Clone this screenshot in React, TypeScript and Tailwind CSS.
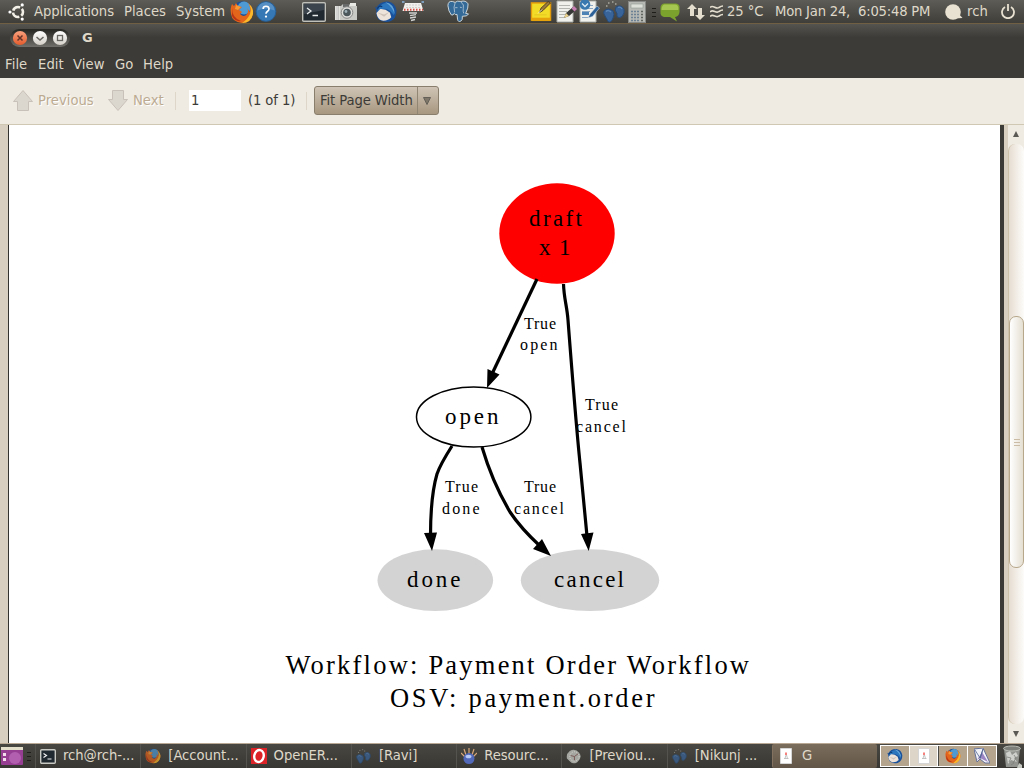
import type { ReactNode } from "react";

const SANS = "font-['DejaVu_Sans',sans-serif]";

function Icon({ box, className, children }: { box: string; className: string; children: ReactNode }) {
  return (
    <svg viewBox={box} className={`block shrink-0 ${className}`} aria-hidden="true">
      {children}
    </svg>
  );
}

function Ubuntu({ className }: { className: string }) {
  return (
    <Icon box="0 0 18 18" className={className}>
      <circle cx="10" cy="9" r="5" fill="none" stroke="#f3f0e8" strokeWidth="2.6" strokeDasharray="8.4 2.072" strokeDashoffset="4.2" />
      <circle cx="2" cy="9" r="1.6" fill="#fff" />
      <circle cx="14.200" cy="1.900" r="1.6" fill="#fff" />
      <circle cx="14.200" cy="16.100" r="1.6" fill="#fff" />
    </Icon>
  );
}

function Firefox({ className }: { className: string }) {
  return (
    <Icon box="0 0 24 24" className={className}>
      <circle cx="12.3" cy="11.5" r="10.3" fill="#1d4f94" />
      <circle cx="14" cy="8" r="6.5" fill="#4d9ad5" />
      <path d="M2 4L4 6L6 3L8 6L12 7L9 10L12 12L10 14Q14 18 17 14Q19 11 17 8L20 12Q21 7 18 3Q24 8 23 14Q21 23 12 23Q2 22 1 14Q0 8 2 4Z" fill="#e3641b" />
      <path d="M18 3Q24 8 23 14Q21 23 12 23Q18 19 20 14Q22 7 18 3Z" fill="#f9b92a" />
      <path d="M2 8Q2 18 11 21Q5 22 2 16Z" fill="#b93516" />
      <path d="M6 5L11 7L8 10L5 9Z" fill="#f69a37" />
    </Icon>
  );
}

function Help({ className }: { className: string }) {
  return (
    <Icon box="0 0 22 24" className={className}>
      <circle cx="11" cy="12" r="10.3" fill="#3678b6" stroke="#265e95" />
      <path d="M2 11a9 9 0 0118 0Q11 7 2 11Z" fill="#6298cb" opacity=".7" />
      <path d="M8 9.3Q8 6.5 11 6.5T14.2 9.2Q14.2 10.7 12.4 12Q11 13 11 14.4" fill="none" stroke="#fff" strokeWidth="1.7" />
      <circle cx="11" cy="17.3" r="1.2" fill="#fff" />
    </Icon>
  );
}

function Terminal({ className }: { className: string }) {
  return (
    <Icon box="0 0 24 20" className={className}>
      <rect x=".7" y=".7" width="22.6" height="18.6" rx="1" fill="#202830" stroke="#c0c0ba" strokeWidth="1.4" />
      <path d="M2 2H22V8L2 12Z" fill="#3b444c" />
      <path d="M5 6L9 9L5 12M10.500 13.500H16" fill="none" stroke="#e8ecec" strokeWidth="1.3" />
    </Icon>
  );
}

function SmallTerminal() {
  return (
    <Icon box="0 0 16 15" className="h-[15px] w-4">
      <rect x=".7" y=".7" width="14.600" height="13.600" rx="1" fill="#202830" stroke="#c9c9c3" strokeWidth="1.400" />
      <path d="M3.500 4.500L6.500 6.500L3.500 8.500M7.500 10H11.500" fill="none" stroke="#f0f2f2" strokeWidth="1.200" />
    </Icon>
  );
}

function Camera({ className }: { className: string }) {
  return (
    <Icon box="0 0 22 20" className={className}>
      <path d="M0 4H6L8 2H14L16 4H22V18H0Z" fill="#c9c9c5" />
      <path d="M0 4H5V18H0Z" fill="#e2e2df" />
      <path d="M15 1H21V4H15Z" fill="#e9e9e6" />
      <path d="M8 2H14V5H8Z" fill="#686a6a" />
      <circle cx="12" cy="10.500" r="5.800" fill="#dededb" stroke="#888" />
      <circle cx="12" cy="10.500" r="3.8" fill="#4b565a" />
      <circle cx="11" cy="9.500" r="1.4" fill="#9db0b5" />
      <path d="M2 4V18M3.500 4V18" stroke="#aaa" strokeWidth=".5" />
    </Icon>
  );
}

function Thunderbird({ className }: { className: string }) {
  return (
    <Icon box="0 0 24 24" className={className}>
      <path d="M2 8Q6 1 14 1.500Q22 3 23 11Q23 20 16 22.500Q9 24 4 20Q1 16 2 11L.5 7Z" fill="#1a519b" />
      <path d="M5 7Q10 1 16 4Q22 8 20 16Q17 10 11 9Q6 9 3 12Z" fill="#2c76bd" />
      <path d="M11 2Q21 4 21 15Q19 7 11 2Z" fill="#66a7d9" />
      <path d="M2 13.500L6 9.500Q11 9 16 13L17.500 18Q14 22 8 21.500Q3 20 2 13.500Z" fill="#ede3da" />
      <path d="M3 13L10 15L15.500 12.500L10 17.500Z" fill="#cfc3b9" />
      <path d="M3 9Q5 5 8 7" stroke="#0b3872" strokeWidth="1.3" fill="none" />
    </Icon>
  );
}

function Spring({ className }: { className: string }) {
  return (
    <Icon box="0 0 22 21" className={className}>
      <path d="M0 1H2.500M19.500 1H22" stroke="#8bb5df" strokeWidth="1.500" />
      <path d="M3 2H19L21.500 10H.5Z" fill="#f2f0ed" />
      <path d="M2 8.700H21" stroke="#d84c44" strokeWidth="2" strokeDasharray="1.500 1.500" />
      <path d="M4 4H18M4 6.500H18" stroke="#d3d1ce" strokeDasharray="2 1" />
      <path d="M7 12H15M8 14.700L14 13.700M8 17L14 16M9 19.500L13 18.500" stroke="#d1d1cf" strokeWidth="1.300" />
    </Icon>
  );
}

function Postgres({ className }: { className: string }) {
  return (
    <Icon box="0 0 24 24" className={className}>
      <path d="M6 1.500Q1.500 1 1.500 6Q2 12 5 15.500Q7 16.500 8 14Q9 16 11 15L11.500 20Q12 23.500 15 22Q17 21 16.500 17L21 16.500L23 14.500L20 14Q23 8 22.500 4Q20 0 15 1.500Q11 .5 9 2.500Z" fill="#336a98" stroke="#cfd9df" strokeWidth="1" />
      <path d="M9 3Q7 7 8.500 13M15 2Q19 5 17.500 9Q17 12 18 14M9 8H11.500M14 7.500L16 8" stroke="#c0d0dc" strokeWidth=".8" fill="none" />
    </Icon>
  );
}

function Note({ className }: { className: string }) {
  return (
    <Icon box="0 0 22 22" className={className}>
      <rect x="1" y="2" width="20" height="18" fill="#f3dc28" stroke="#e49b0b" strokeWidth="1.500" />
      <path d="M1 17.500H21V21H1Z" fill="#e6a30b" />
      <path d="M9.500 12L11 7.500L18.500 .5L21 2L13 10Z" fill="#9b7a3c" stroke="#413623" strokeWidth=".9" />
      <path d="M8 13L12 9" stroke="#fff3c0" />
      <path d="M4 14.500H17" stroke="#e3c61f" />
    </Icon>
  );
}

function Editor({ className, blog }: { className: string; blog?: boolean }) {
  return (
    <Icon box="0 0 21 23" className={className}>
      <path d="M1 1H17V22H1Z" fill="#f0f1ed" stroke="#abaea7" />
      <path d="M3 5.500H14M3 8.500H14M3 11.500H11M3 14.500H10M3 17.500H9" stroke={blog ? "#8aa6c0" : "#b4b6b1"} />
      {blog ? (
        <>
          <path d="M3 12H10V15H3Z" fill="#4e83b5" />
          <path d="M9 18L11 14L18 6L20.500 8L13.500 16.500Z" fill="#2c6198" stroke="#e2e8ed" strokeWidth=".5" />
          <circle cx="6" cy="4.500" r="5.300" fill="#3a78b0" />
          <path d="M3 3.500L6 6.500L9 3.500" fill="none" stroke="#dceaf3" strokeWidth="1.300" />
        </>
      ) : (
        <>
          <path d="M8 18L10 13L17 7L20 10L13 16Z" fill="#373936" />
          <path d="M15.500 8.500L18 6L21 9L18.500 11.500Z" fill="#c57fb0" />
          <path d="M8 18L10 13L13 16Z" fill="#ead28d" />
        </>
      )}
    </Icon>
  );
}

function Feet({ className }: { className: string }) {
  return (
    <Icon box="0 0 22 22" className={className}>
      <path d="M1 10Q5 6 10 10Q12 13 10 17Q8 22.500 5 20.500Q4 18 2 15Q0 12 1 10Z" fill="#38649a" stroke="#284c79" />
      <path d="M13 6Q18 3 21 8Q22 12 19 15.500Q16 18 14 15.500L14 12.500Q11 9 13 6Z" fill="#38649a" stroke="#284c79" />
      <path d="M3 10.500Q5 8.500 8 11M15 6.500Q17.500 5.500 19 8" stroke="#5c88ba" strokeWidth="1.200" fill="none" />
      <path d="M3 5h1.500M5 2h1.500M9 1h1.500M12 3h1.500" stroke="#a8a8a0" strokeWidth="1.300" />
    </Icon>
  );
}

function Calculator({ className }: { className: string }) {
  return (
    <Icon box="0 0 18 22" className={className}>
      <rect x=".5" y=".5" width="17" height="21" fill="#b7b9b5" stroke="#868985" />
      <path d="M3 3H15V7H3Z" fill="#dce0d8" stroke="#969c93" strokeWidth=".6" />
      <path d="M3 10.500H11M3 13.500H11M3 16.500H11M3 19.500H11" stroke="#6c8294" strokeWidth="1.600" strokeDasharray="2 1" />
      <path d="M13 10.500H15M13 13.500H15M13 16.500H15M13 19.500H15" stroke="#61655f" strokeWidth="1.600" />
    </Icon>
  );
}

function Grip({ className }: { className: string }) {
  return (
    <Icon box="0 0 4 10" className={className}>
      <path d="M0 1.500H4M0 5.500H4M0 9.500H4" stroke="#1f1e1b" />
    </Icon>
  );
}

function Paper({ className }: { className: string }) {
  return (
    <Icon box="0 0 12 16" className={className}>
      <path d="M.5 .5H11.500V15.500H.5Z" fill="#fff" stroke="#d5d5d5" />
      <path d="M6 4.500V7" stroke="#f56b65" strokeWidth="1.700" />
      <path d="M6 7L5 10.500M6.500 7L7.500 10.500M4 10.500H8.500" stroke="#b5b5b5" strokeWidth=".8" />
    </Icon>
  );
}

function TopPanel() {
  return (
    <header className="flex h-6 shrink-0 items-center border-b border-[#705f43] bg-linear-to-b from-[#5d5c56] to-[#3f3e39] leading-none">
      <Ubuntu className="ml-2 h-[18px] w-[18px]" />
      <span className="ml-2 w-[90px] tracking-[-0.05px]">Applications</span>
      <span className="w-[52px]">Places</span>
      <span className="w-[54px]">System</span>
      <Firefox className="h-6 w-6" />
      <Help className="ml-px h-[23px] w-[22px]" />
      <Terminal className="ml-[25px] h-5 w-6" />
      <Camera className="ml-[9px] h-5 w-[22px]" />
      <Thunderbird className="ml-[17px] h-[23px] w-6" />
      <Spring className="ml-1 h-[21px] w-[22px]" />
      <Postgres className="ml-[22px] h-[23px] w-6" />
      <Note className="ml-[60px] h-[21px] w-[22px]" />
      <Editor className="ml-1 h-[23px] w-[21px]" />
      <Editor blog className="ml-[2px] h-[23px] w-[21px]" />
      <Feet className="ml-[3px] h-[22px] w-[22px]" />
      <Calculator className="ml-[3px] h-[22px] w-[18px]" />
      <Grip className="ml-[6px] h-[10px] w-1" />
      <Icon box="0 0 20 20" className="ml-1 h-5 w-5">
        <path d="M4 1.500H16Q20 2 19.500 6V10Q19 14.500 15 15L17 19.500L10 15H4Q0 14 .5 10V6Q.5 2 4 1.500Z" fill="#7ca22e" />
        <path d="M4.500 2.500H15.500Q19 3 18.300 8H1.500Q1.500 3 4.500 2.500Z" fill="#a5c650" />
      </Icon>
      <Icon box="0 0 18 16" className="ml-[7px] h-4 w-[18px]">
        <path d="M5 0L10 5H7V12H3V5H0ZM11 4H15V11H18L13 16L8 11H11Z" fill="#e4decf" />
      </Icon>
      <Icon box="0 0 13 13" className="ml-[5px] h-[13px] w-[13px]">
        <path d="M0 2.500C3 -1 6 5 9 2.500Q11 1 13 1M0 7C3 3.500 6 9 9 6.500Q11 5 13 5M0 11.500C3 8 6 13.500 9 11Q11 9.500 13 9.500" fill="none" stroke="#e4decf" strokeWidth="1.6" />
      </Icon>
      <span className="ml-1 w-12 tracking-[-0.1px]">25 °C</span>
      <span className="w-[170px] whitespace-pre tracking-[-0.22px]">{"Mon Jan 24,  6:05:48 PM"}</span>
      <Icon box="0 0 18 16" className="h-4 w-[18px]">
        <circle cx="8" cy="8" r="7.800" fill="#e9e2d2" />
        <path d="M13 9L17.500 14L10 14.500Z" fill="#e9e2d2" />
      </Icon>
      <span className="ml-1 w-[34px]">rch</span>
      <Icon box="0 0 14 15" className="h-[15px] w-[14px]">
        <path d="M4 3A6 6 0 1010 3M7 0V7" fill="none" stroke="#e9e2d2" strokeWidth="1.8" />
      </Icon>
    </header>
  );
}

function TitleBar() {
  return (
    <div className="flex h-[27px] shrink-0 items-center bg-linear-to-b from-[#55544f] to-[#3c3b37] to-50%">
      <Icon box="0 0 60 18" className="ml-[10px] h-[18px] w-[60px]">
        <defs>
          <linearGradient id="pill" x2="0" y2="1"><stop stopColor="#252521" /><stop offset="1" stopColor="#716f69" /></linearGradient>
          <linearGradient id="orange" x2="0" y2="1"><stop stopColor="#f9a17d" /><stop offset="1" stopColor="#e45b2c" /></linearGradient>
          <linearGradient id="cream" x2="0" y2="1"><stop stopColor="#fff" /><stop offset="1" stopColor="#d4d0c8" /></linearGradient>
        </defs>
        <rect y="0" width="60" height="18" rx="9" fill="url(#pill)" />
        <circle cx="10" cy="9" r="7.100" fill="url(#orange)" />
        <circle cx="30" cy="9" r="7.100" fill="url(#cream)" />
        <circle cx="50" cy="9" r="7.100" fill="url(#cream)" />
        <path d="M7.500 6.500L12.500 11.500M12.500 6.500L7.500 11.500" stroke="#62342a" strokeWidth="1.500" />
        <path d="M26.500 8L30 11L33.500 8" fill="none" stroke="#686660" strokeWidth="1.500" />
        <rect x="47.500" y="6.500" width="5" height="5" fill="none" stroke="#686660" strokeWidth="1.300" />
      </Icon>
      <span className="ml-3 text-[13px] font-bold">G</span>
    </div>
  );
}

function MenuBar() {
  return (
    <nav className="flex h-[27px] shrink-0 items-center bg-[#3c3b37] pl-[5px] tracking-[0.05px]">
      <span className="w-[33px]">File</span>
      <span className="w-[35px]">Edit</span>
      <span className="w-[42px]">View</span>
      <span className="w-7">Go</span>
      <span>Help</span>
    </nav>
  );
}

function Toolbar() {
  return (
    <div className="flex h-[47px] shrink-0 items-center border-b border-[#d1c8b3] bg-[#efebe3] pb-px text-[#3c3b37]">
      <Icon box="0 0 20 21" className="ml-[13px] h-[21px] w-5">
        <path d="M10 .5L19.500 11.500H15.500V20.500H4.500V11.500H.5Z" fill="#dbd6ce" stroke="#c8c1b9" />
      </Icon>
      <span className="ml-[5px] w-[70px] text-[#bcab92] [text-shadow:1px_1px_0_#fff]">Previous</span>
      <Icon box="0 0 20 21" className="h-[21px] w-5">
        <path d="M4.500 .5H15.500V9.500H19.500L10 20.500L.5 9.500H4.500Z" fill="#dbd6ce" stroke="#c8c1b9" />
      </Icon>
      <span className="ml-[5px] w-[42px] text-[#bcab92] [text-shadow:1px_1px_0_#fff]">Next</span>
      <div className="h-[18px] w-px bg-[#ded6c8]" />
      <div className="ml-[13px] flex h-[21px] w-[52px] items-center bg-white pl-[2px]">1</div>
      <span className="ml-[7px] w-[58px] tracking-[-0.12px]">(1 of 1)</span>
      <div className="h-[18px] w-px bg-[#ded6c8]" />
      <button className="ml-[7px] flex h-[29px] w-[125px] items-center rounded-[3px] border border-[#897d6b] bg-linear-to-b from-[#cfc4b5] to-[#a79780]">
        <span className="w-[102px] pl-[5px] text-left tracking-[-0.1px]">Fit Page Width</span>
        <span className="flex h-full flex-1 items-center justify-center border-l border-[#918674] pr-[3px]">
          <Icon box="0 0 8 8" className="h-2 w-2">
            <path d="M.5 .5H7.500L4 7.500Z" fill="#7d7669" stroke="#5d5a52" strokeWidth=".9" />
          </Icon>
        </span>
      </button>
    </div>
  );
}

type Label = { text: string; x: number; y: number; w: number; size: number };

const labels: Label[] = [
  { text: "draft", x: 529, y: 226, w: 53, size: 23 },
  { text: "x 1", x: 539, y: 255, w: 31.500, size: 23 },
  { text: "True", x: 524, y: 329, w: 32, size: 16 },
  { text: "open", x: 520, y: 350, w: 37.500, size: 16 },
  { text: "True", x: 585, y: 410, w: 33, size: 16 },
  { text: "cancel", x: 576, y: 432, w: 50, size: 16 },
  { text: "open", x: 445, y: 424, w: 53.500, size: 23 },
  { text: "True", x: 445, y: 492, w: 33, size: 16 },
  { text: "done", x: 442, y: 514, w: 37.500, size: 16 },
  { text: "True", x: 524, y: 492, w: 32, size: 16 },
  { text: "cancel", x: 514, y: 514, w: 50, size: 16 },
  { text: "done", x: 407, y: 587, w: 53.500, size: 23 },
  { text: "cancel", x: 554, y: 587, w: 70, size: 23 },
  { text: "Workflow: Payment Order Workflow", x: 285.500, y: 673.500, w: 463.500, size: 26.500 },
  { text: "OSV: payment.order", x: 390, y: 707.300, w: 264.500, size: 26.500 },
];

function Diagram() {
  return (
    <svg viewBox="9 125 991 618" className="block h-[618px] w-[991px] shrink-0 bg-white">
      <ellipse cx="557" cy="233.500" rx="57.700" ry="50.300" fill="#f00" />
      <ellipse cx="473.700" cy="417" rx="57.200" ry="30" fill="#fff" stroke="#000" strokeWidth="1.500" />
      <ellipse cx="435.300" cy="580.200" rx="57.800" ry="30.900" fill="#d3d3d3" />
      <ellipse cx="590" cy="580.200" rx="69.200" ry="30.900" fill="#d3d3d3" />
      <g fill="none" stroke="#000" strokeWidth="3.200">
        <path d="M537 279L492 374" />
        <path d="M563.500 284C564 299 567 306 568 320C573 385 577 434 580 463L587 536" />
        <path d="M452 446C445 457 440 465 437 474C432 491 430.500 511 430.500 536" />
        <path d="M482 447C487 464 497 490 510 512C518 524 527 534 540 546" />
      </g>
      <path d="M487 388L487.500 369L499.500 374.500ZM588.700 551L581 534L593.500 532.500ZM432 551L424 533L437 532.500ZM551 556L533 549L542 539Z" />
      <g className="font-['Liberation_Serif',serif]">
        {labels.map((l) => (
          <text key={`${l.x}-${l.y}`} x={l.x} y={l.y} fontSize={l.size} textLength={l.w} lengthAdjust="spacing">
            {l.text}
          </text>
        ))}
      </g>
    </svg>
  );
}

function Scrollbar() {
  return (
    <div className="flex w-4 shrink-0 flex-col items-center bg-[#efebe3]">
      <Icon box="0 0 6 6" className="mt-[6px] mb-[7px] h-[6px] w-[6px]">
        <path d="M3 0L6 6H0Z" fill="#5b5953" />
      </Icon>
      <div className="flex h-[580px] w-4 flex-col rounded-[7px] border-l border-[#cfc2aa] bg-linear-to-r from-[#e6ddd1] to-[#fdfcfa] pt-[172px]">
        <div className="flex h-[252px] w-[15px] flex-col items-center justify-center gap-[2px] rounded-[7px] border border-[#b7a78b] bg-linear-to-r from-[#fff] to-[#e5dfd2]">
          <i className="h-px w-[6px] bg-[#cbbda5]" />
          <i className="h-px w-[6px] bg-[#cbbda5]" />
          <i className="h-px w-[6px] bg-[#cbbda5]" />
        </div>
      </div>
      <Icon box="0 0 6 6" className="mt-[7px] h-[6px] w-[6px]">
        <path d="M0 0H6L3 6Z" fill="#5b5953" />
      </Icon>
    </div>
  );
}

function Task({ icon, title, className = "" }: { icon: ReactNode; title: string; className?: string }) {
  return (
    <div className={`flex h-6 w-[105.300px] shrink-0 items-center border-l border-[#55534d] pl-[4px] ${className}`}>
      <span className="flex w-[23px] shrink-0">{icon}</span>
      <span className="whitespace-nowrap tracking-[-0.06px]">{title}</span>
    </div>
  );
}

function Taskbar() {
  return (
    <footer className="flex h-[25px] shrink-0 items-center border-t border-[#b9a893] bg-linear-to-b from-[#484741] to-[#383733] leading-none">
      <Icon box="0 0 22 18" className="ml-px h-[18px] w-[22px]">
        <rect width="22" height="18" rx="1" fill="#963f92" />
        <circle cx="14" cy="11" r="6" fill="#c575c4" opacity=".6" />
        <path d="M0 0H22V3H0Z" fill="#e3dec9" />
        <path d="M2 6H5V9H2ZM2 11H5V14H2Z" fill="#f3dcec" />
      </Icon>
      <Grip className="ml-1 h-[10px] w-1" />
      <Task className="ml-1" icon={<SmallTerminal />} title="rch@rch-..." />
      <Task icon={<Firefox className="h-4 w-4 opacity-70" />} title="[Account..." />
      <Task
        icon={
          <Icon box="0 0 16 16" className="h-4 w-4">
            <rect width="16" height="16" fill="#dc2328" />
            <ellipse cx="8" cy="8" rx="4.700" ry="6" fill="none" stroke="#fff" strokeWidth="2.400" transform="rotate(12 8 8)" />
          </Icon>
        }
        title="OpenER..."
      />
      <Task icon={<Feet className="h-[15px] w-[15px] opacity-70" />} title="[Ravi]" />
      <Task
        icon={
          <Icon box="0 0 16 16" className="h-4 w-4">
            <path d="M4 9L0 5M5 7L3 1M8 7V0M11 7L13 1M12 9L16 5" stroke="#d9a77a" strokeWidth="1.200" />
            <circle cx="8" cy="10.500" r="5.500" fill="#5268b9" />
            <ellipse cx="7.500" cy="8.500" rx="3" ry="1.800" fill="#b8c9f4" />
          </Icon>
        }
        title="Resourc..."
      />
      <Task
        icon={
          <Icon box="0 0 16 16" className="h-[15px] w-[15px]">
            <path d="M4 2Q10 -1 14 4T12 14Q7 17 4 13L1 10Q0 5 4 2Z" fill="#a6a6a1" />
            <circle cx="9" cy="8" r="5" fill="none" stroke="#deded8" strokeDasharray="1 1.500" />
            <path d="M9 8L13 5M9 8V12M9 8L5 7" stroke="#765551" />
          </Icon>
        }
        title="[Previou..."
      />
      <Task icon={<Feet className="h-[15px] w-[15px] opacity-70" />} title="[Nikunj ..." />
      <Task
        className="rounded-[2px] border-[#82725f] bg-linear-to-b from-[#7b6d5c] to-[#625648] pl-[7px] [&>span:first-child]:w-[22px]"
        icon={<Paper className="h-4 w-3" />}
        title="G"
      />
      <div className="ml-[2.600px] flex h-[22px] w-[117px] shrink-0 gap-px border border-white bg-white">
        <span className="flex flex-1 items-center justify-center bg-[#b4a48e]"><Thunderbird className="h-4 w-4" /></span>
        <span className="flex flex-1 items-center justify-center bg-[#ded5c9]"><Paper className="h-4 w-3" /></span>
        <span className="flex flex-1 items-center justify-center border-l border-[#4a4842] bg-[#b4a48e]"><Firefox className="h-4 w-4" /></span>
        <span className="flex flex-1 items-center justify-center bg-[#b4a48e]">
          <Icon box="0 0 16 16" className="h-4 w-4">
            <path d="M0 1L9 0L16 15L11 15L6 11L3 14Z" fill="#f1f2f7" stroke="#657198" />
            <path d="M3 12L8 4L14 14L10 12L6 10Z" fill="#9b85c2" />
            <path d="M1 2L6 10L9 1L6 11" fill="none" stroke="#4f6393" strokeWidth=".8" />
          </Icon>
        </span>
      </div>
      <Icon box="0 0 20 23" className="ml-[5px] h-[23px] w-5">
        <path d="M2 4H18L16 22H4Z" fill="#92948f" />
        <path d="M4 8L8 6L10 10L14 7L16 11L12 13L15 17L9 15L6 19L5 13Z" fill="#cfd1cd" />
        <path d="M5 12L9 13L7 17M12 10L14 13L11 18M9 20L12 18" fill="none" stroke="#7c7f7a" strokeWidth=".8" />
        <ellipse cx="10" cy="3.500" rx="8.500" ry="2.500" fill="#7d807a" stroke="#b9bcb5" />
        <path d="M17 18L20 20V23H15Z" fill="#c7cac3" />
      </Icon>
    </footer>
  );
}

export default function App() {
  return (
    <div className={`flex h-[768px] w-[1024px] flex-col overflow-hidden ${SANS} text-[13.200px] text-[#dfd8c9]`}>
      <TopPanel />
      <TitleBar />
      <MenuBar />
      <Toolbar />
      <main className="flex h-[618px] shrink-0">
        <div className="w-[9px] shrink-0 border-r border-[#34332f] bg-[#d9cfc0]" />
        <Diagram />
        <div className="w-1 shrink-0 bg-[#3c3b37]" />
        <div className="w-1 shrink-0 bg-[#d9cfc0]" />
        <Scrollbar />
      </main>
      <Taskbar />
    </div>
  );
}
